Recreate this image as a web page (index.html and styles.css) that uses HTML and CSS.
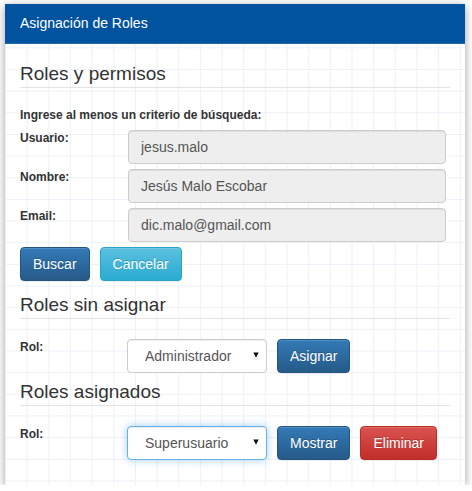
FILE: index.html
```html
<!DOCTYPE html>
<html lang="es">
<head>
<meta charset="utf-8">
<title>Asignación de Roles</title>
<link rel="stylesheet" href="styles.css">
</head>
<body>
<div class="panel">
  <div class="panel-heading">Asignación de Roles</div>
  <div class="panel-body">
    <h3 class="section-title">Roles y permisos</h3>
    <p class="hint">Ingrese al menos un criterio de búsqueda:</p>
    <div class="form-rows">
      <div class="form-row">
        <label class="field-label">Usuario:</label>
        <input class="text-input" type="text" value="jesus.malo" readonly>
      </div>
      <div class="form-row">
        <label class="field-label">Nombre:</label>
        <input class="text-input" type="text" value="Jesús Malo Escobar" readonly>
      </div>
      <div class="form-row">
        <label class="field-label">Email:</label>
        <input class="text-input" type="text" value="dic.malo@gmail.com" readonly>
      </div>
    </div>
    <div class="actions">
      <button class="btn btn-primary">Buscar</button>
      <button class="btn btn-info">Cancelar</button>
    </div>

    <h3 class="section-title section-second">Roles sin asignar</h3>
    <div class="role-row">
      <label class="field-label role-label">Rol:</label>
      <div class="select-box">
        <span>Administrador</span>
        <svg class="caret" width="6" height="6" viewBox="0 0 6 6"><polygon points="0.3,0.5 5.7,0.5 3,5.8" fill="#111"/></svg>
      </div>
      <button class="btn btn-primary">Asignar</button>
    </div>

    <h3 class="section-title section-third">Roles asignados</h3>
    <div class="role-row">
      <label class="field-label role-label">Rol:</label>
      <div class="select-box is-focused">
        <span>Superusuario</span>
        <svg class="caret" width="6" height="6" viewBox="0 0 6 6"><polygon points="0.3,0.5 5.7,0.5 3,5.8" fill="#111"/></svg>
      </div>
      <button class="btn btn-primary">Mostrar</button>
      <button class="btn btn-danger">Eliminar</button>
    </div>
  </div>
</div>
</body>
</html>
```

FILE: styles.css
```css
* { box-sizing: border-box; }

html, body {
  margin: 0;
  padding: 0;
  background: #ffffff;
}

body {
  font-family: "Liberation Sans", Arial, Helvetica, sans-serif;
  color: #333333;
  font-size: 14px;
  padding: 4px 0 0 5px;
}

.panel {
  width: 460px;
  height: 481px;
  background-color: #ffffff;
  background-image:
    linear-gradient(to right, #eef0f8 1px, transparent 1px),
    linear-gradient(to bottom, #eef0f8 1px, transparent 1px);
  background-size: 21.67px 21.67px;
  background-position: 0 0;
  box-shadow: 0 2px 9px rgba(0, 0, 0, 0.38);
}

.panel-heading {
  height: 40px;
  padding: 0 15px;
  background: #01529f;
  border-bottom: 1px solid #2466aa;
  color: #ffffff;
  font-size: 14px;
  line-height: 39px;
}

.panel-body {
  padding: 19px 15px 25px 15px;
}

.section-title {
  margin: 0;
  font-size: 19px;
  font-weight: normal;
  line-height: 22px;
  color: #333333;
  padding-bottom: 2px;
  border-bottom: 1px solid #e3e3e3;
}

.section-second { margin-top: 13px; }
.section-third { margin-top: 8px; }

.hint {
  margin: 19px 0 6px 0;
  font-size: 12px;
  font-weight: bold;
  line-height: 17px;
}

.form-rows {
  display: flex;
  flex-direction: column;
  gap: 5px;
}

.form-row {
  display: flex;
  align-items: flex-start;
}

.field-label {
  width: 108px;
  flex: none;
  font-size: 12px;
  font-weight: bold;
  line-height: 17px;
}

.role-label { width: 107px; }

.text-input {
  width: 318px;
  height: 34px;
  padding: 6px 12px;
  border: 1px solid #cccccc;
  border-radius: 4px;
  background: #eeeeee;
  color: #555555;
  font-family: "Liberation Sans", Arial, Helvetica, sans-serif;
  font-size: 14px;
  box-shadow: inset 0 1px 1px rgba(0, 0, 0, 0.075);
  outline: none;
}

.actions {
  margin-top: 5px;
  display: flex;
  gap: 10px;
}

.btn {
  height: 34px;
  padding: 6px 12px;
  border: 1px solid transparent;
  border-radius: 4px;
  color: #ffffff;
  font-family: "Liberation Sans", Arial, Helvetica, sans-serif;
  font-size: 14px;
  line-height: 20px;
  text-shadow: 0 -1px 0 rgba(0, 0, 0, 0.2);
  box-shadow: inset 0 1px 0 rgba(255, 255, 255, 0.15), 0 1px 1px rgba(0, 0, 0, 0.075);
  cursor: pointer;
}

.btn-primary {
  background-image: linear-gradient(to bottom, #337ab7 0, #265a88 100%);
  border-color: #245580;
}

.btn-info {
  background-image: linear-gradient(to bottom, #5bc0de 0, #2aabd2 100%);
  border-color: #28a4c9;
}

.btn-danger {
  background-image: linear-gradient(to bottom, #d9534f 0, #c12e2a 100%);
  border-color: #b92c28;
}

.role-row {
  margin-top: 20px;
  display: flex;
  align-items: flex-start;
  gap: 10px;
}

.role-row .field-label { margin-right: -10px; }

.select-box {
  width: 140px;
  height: 34px;
  display: flex;
  align-items: center;
  justify-content: space-between;
  padding: 0 7px 0 17px;
  border: 1px solid #cccccc;
  border-radius: 4px;
  background: #ffffff;
  color: #555555;
  font-size: 14px;
  box-shadow: inset 0 1px 1px rgba(0, 0, 0, 0.075);
}

.select-box.is-focused {
  border-color: #66afe9;
  box-shadow: inset 0 1px 1px rgba(0, 0, 0, 0.075), 0 0 8px rgba(102, 175, 233, 0.6);
}

.caret {
  display: block;
  margin-top: -3px;
}
```
